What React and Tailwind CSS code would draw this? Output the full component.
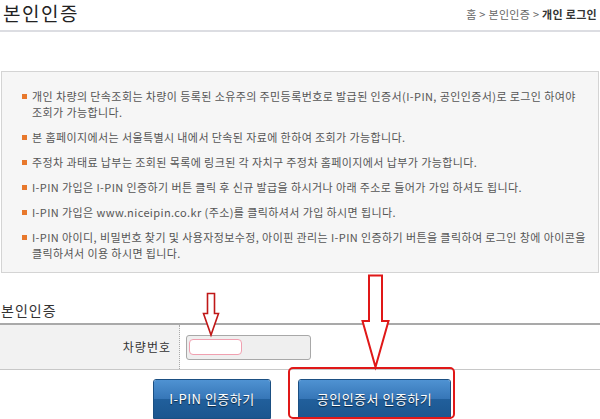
import React from 'react';

const notices = [
  ['개인 차량의 단속조회는 차량이 등록된 소유주의 주민등록번호로 발급된 인증서(I-PIN, 공인인증서)로 로그인 하여야', '조회가 가능합니다.'],
  ['본 홈페이지에서는 서울특별시 내에서 단속된 자료에 한하여 조회가 가능합니다.'],
  ['주정차 과태료 납부는 조회된 목록에 링크된 각 자치구 주정차 홈페이지에서 납부가 가능합니다.'],
  ['I-PIN 가입은 I-PIN 인증하기 버튼 클릭 후 신규 발급을 하시거나 아래 주소로 들어가 가입 하셔도 됩니다.'],
  ['I-PIN 가입은 www.niceipin.co.kr (주소)를 클릭하셔서 가입 하시면 됩니다.'],
  ['I-PIN 아이디, 비밀번호 찾기 및 사용자정보수정, 아이핀 관리는 I-PIN 인증하기 버튼을 클릭하여 로그인 창에 아이콘을', '클릭하셔서 이용 하시면 됩니다.'],
];

function BlueButton({ children, className = '' }) {
  return (
    <button
      className={`relative h-[40px] overflow-hidden rounded-t-[3px] border border-[#1b4f82] text-[13px] text-white tracking-[0.5px] ${className}`}
      style={{ textShadow: '0 1px 1px rgba(0,0,0,0.6)' }}
    >
      <span className="absolute inset-x-0 top-0 h-1/2 bg-gradient-to-b from-[#4f92d2] to-[#3676b7]" />
      <span className="absolute inset-x-0 bottom-0 h-1/2 bg-gradient-to-b from-[#215f9c] to-[#1b568f]" />
      <span className="relative">{children}</span>
    </button>
  );
}

export default function App() {
  return (
    <div className="relative h-[419px] w-[600px] overflow-hidden bg-white font-['Noto_Sans_CJK_KR','Noto_Sans',sans-serif]">
      {/* header */}
      <div className="flex h-[32px] items-start justify-between border-b-2 border-[#dcdde2] pr-[3px]">
        <h1 className="pl-[3px] pt-[1px] text-[19px] leading-[24px] text-[#222] tracking-[1.5px]">본인인증</h1>
        <div className="mt-[6px] text-[11px] leading-[16px] text-[#666] tracking-[0.3px]">
          홈 &gt; 본인인증 &gt; <span className="font-bold text-[#333]">개인 로그인</span>
        </div>
      </div>

      {/* notice box */}
      <div className="mx-[1px] mt-[39px] h-[202px] border border-[#d4d4d4] bg-[#f6f6f6] pl-[20px] pt-[16px]">
        <ul className="flex flex-col gap-[9px]">
          {notices.map((lines, i) => (
            <li key={i} className="flex text-[11px] leading-[16px] text-[#555] tracking-[0.4px]">
              <span className="mr-[5px] mt-[6px] h-[5px] w-[5px] shrink-0 bg-[#e8782c]" />
              <div>
                {lines.map((l, j) => (
                  <div key={j} className="whitespace-nowrap">{l}</div>
                ))}
              </div>
            </li>
          ))}
        </ul>
      </div>

      {/* 본인인증 form */}
      <div className="mt-[28px] pl-[1px] text-[14px] leading-[18px] text-[#333] tracking-[1px]">본인인증</div>
      <div className="mt-[4px] flex h-[47px] border-t-2 border-b border-t-[#a9a9a9] border-b-[#c8c8c8]">
        <div className="flex w-[180px] items-center justify-end border-r border-dotted border-r-[#aaa] bg-[#f2f2f2] pr-[8px] text-[12px] text-[#333] tracking-[1px]">
          차량번호
        </div>
        <div className="flex items-center pl-[6px]">
          <div className="flex h-[25px] w-[125px] items-center rounded-[3px] border border-[#a8a8a8] bg-[#efefef] pl-[2px]">
            <div className="h-[16px] w-[53px] rounded-[4px] border border-[#f0a0b0] bg-white" />
          </div>
        </div>
      </div>

      {/* buttons */}
      <div className="mt-[9px] flex justify-center gap-[27px] pl-[4px]">
        <BlueButton className="w-[118px]">I-PIN 인증하기</BlueButton>
        <BlueButton className="w-[153px]">공인인증서 인증하기</BlueButton>
      </div>

      {/* annotations */}
      <div className="pointer-events-none absolute left-[288px] top-[367px] h-[52px] w-[167px] rounded-[5px] border-2 border-[#e01818]" />
      <svg className="pointer-events-none absolute left-0 top-0" width="600" height="419">
        <polygon
          points="207.5,293.5 214.5,293.5 214.5,313.5 218.5,313.5 211,335 203.5,313.5 207.5,313.5"
          fill="white"
          stroke="#c01818"
          strokeWidth="1.6"
          strokeLinejoin="miter"
        />
        <polygon
          points="369,275.5 382,275.5 382,321 388.5,321 375.5,367 362.5,321 369,321"
          fill="white"
          stroke="#e01818"
          strokeWidth="2"
          strokeLinejoin="miter"
        />
      </svg>
    </div>
  );
}
